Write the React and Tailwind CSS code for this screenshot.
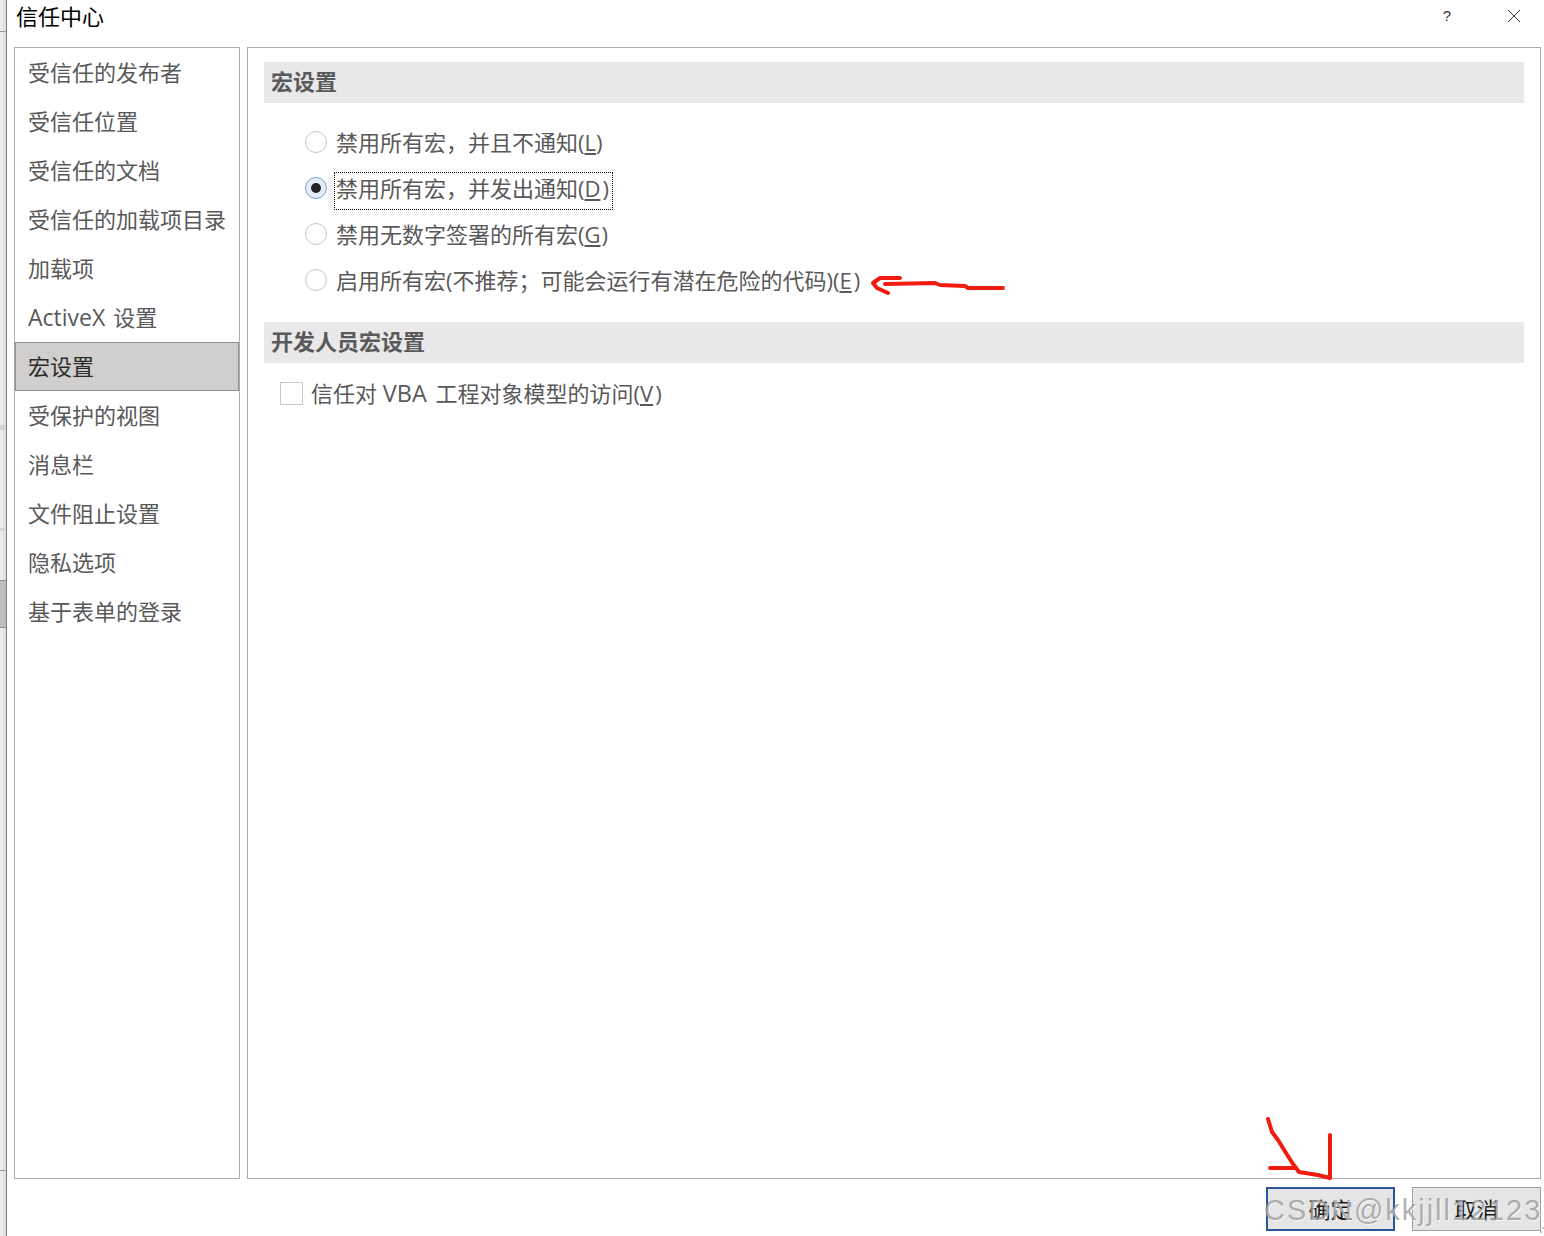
const font = { fontFamily: '"Open Sans", "Noto Sans CJK SC", "Liberation Sans", sans-serif' };

const NAV = ['受信任的发布者','受信任位置','受信任的文档','受信任的加载项目录','加载项','ActiveX 设置','宏设置','受保护的视图','消息栏','文件阻止设置','隐私选项','基于表单的登录'];

function Radio({ checked }) {
  return (
    <span className={`mt-[12px] w-[22px] h-[22px] rounded-full border flex items-center justify-center shrink-0 ${checked ? 'border-[#7ea3cc] bg-[#e4ecf7]' : 'border-[#c8c8c8] bg-white'}`}>
      {checked && <span className="w-[10px] h-[10px] rounded-full bg-[#222222]" />}
    </span>
  );
}

function Option({ checked, text, hot, tail, gap }) {
  return (
    <div className="h-[46px] flex items-start pl-[41px]">
      <Radio checked={checked} />
      <span className={`mt-[7px] ml-[7px] h-[38px] pl-px pr-[3px] pb-[7px] flex items-center text-[22px] leading-[24px] text-[#595959] whitespace-nowrap border border-dotted ${checked ? 'border-black' : 'border-transparent'}`}>
        <span>{text}<span className={`underline underline-offset-2 ${gap}`}>{hot}</span>{tail}</span>
      </span>
    </div>
  );
}

function NavLabel({ n }) {
  if (n === 'ActiveX 设置') {
    return <span><span className="text-[23px] mr-[2px]">ActiveX </span>设置</span>;
  }
  return n;
}

export default function App() {
  return (
    <div style={font} className="relative w-[1544px] h-[1236px] bg-white overflow-hidden flex">
      <div className="w-[7px] h-full shrink-0 flex flex-col border-r border-[#7d7d7d] bg-gradient-to-r from-[#f0f0f0] to-[#dcdcdc]">
        <div className="h-[32px] border-b border-[#9a9a9a]" />
        <div className="h-[393px]" />
        <div className="h-[5px] bg-[#d4d4d4]" />
        <div className="h-[98px]" />
        <div className="h-[3px] bg-[#d4d4d4]" />
        <div className="h-[49px]" />
        <div className="h-[48px] bg-[#bdbdb9] border-y border-[#8f8f8f]" />
        <div className="h-[543px] border-b border-[#9a9a9a]" />
        <div className="flex-1" />
      </div>
      <div className="flex-1 flex flex-col pl-[7px] pr-[3px]">
        <div className="h-[47px] flex items-start justify-between">
          <span className="ml-[2px] mt-px text-[22px] leading-[30px] text-black">信任中心</span>
          <div className="flex items-center mt-[7px] mr-[20px] text-[#333333]">
            <span className="text-[15px] leading-[18px] mr-[56px]" style={{ fontFamily: '"Liberation Sans", sans-serif' }}>?</span>
            <svg width="14" height="14" viewBox="0 0 14 14" fill="none" stroke="#333333" strokeWidth="1"><path d="M1 1 L13 13 M13 1 L1 13" /></svg>
          </div>
        </div>
        <div className="h-[1132px] flex gap-[7px]">
          <nav className="w-[226px] h-full border border-[#ababab] shrink-0">
            {NAV.map((n) => (
              <div key={n} className={`h-[49px] pl-[12px] pb-[2px] flex items-center text-[22px] leading-[30px] whitespace-nowrap ${n === '宏设置' ? 'bg-[#d0cfcd] border border-[#8f8f8f] text-[#2b2b2b]' : 'text-[#595959] ml-px'}`}><NavLabel n={n} /></div>
            ))}
          </nav>
          <main className="flex-1 h-full border border-[#ababab] pt-[14px] px-[16px]">
            <div className="h-[41px] bg-[#e9e9e9] pl-[7px] pb-[4px] flex items-center text-[22px] leading-[30px] font-bold text-[#595959]">宏设置</div>
            <div className="pt-[16px]">
              <Option text="禁用所有宏，并且不通知(" hot="L" tail=")" gap="" />
              <Option checked text="禁用所有宏，并发出通知(" hot="D" tail=")" gap="mr-[2px]" />
              <Option text="禁用无数字签署的所有宏(" hot="G" tail=")" gap="mr-px" />
              <Option text="启用所有宏(不推荐；可能会运行有潜在危险的代码)(" hot="E" tail=")" gap="mr-[2px]" />
            </div>
            <div className="mt-[19px] h-[41px] bg-[#e9e9e9] pl-[7px] pb-[4px] flex items-center text-[22px] leading-[30px] font-bold text-[#595959]">开发人员宏设置</div>
            <div className="mt-[11px] flex items-center pl-[16px] h-[38px]">
              <span className="w-[23px] h-[23px] border border-[#c8c8c8] bg-white shrink-0" />
              <span className="ml-[8px] text-[22px] leading-[30px] text-[#595959] whitespace-nowrap">信任对 <span className="text-[23.5px] mr-[2px]">VBA</span> <span className="ml-px">工程对象模型的访问(</span><span className="underline underline-offset-2 mr-[2px]">V</span>)</span>
            </div>
          </main>
        </div>
        <div className="flex justify-end gap-[17px] pt-[8px]">
          <button className="w-[129px] h-[44px] bg-[#e5e5e5] border-2 border-[#2a5699] pb-px text-[22px] leading-[30px] text-[#1a1a1a] flex items-center justify-center">确定</button>
          <button className="w-[129px] h-[44px] bg-[#e5e5e5] border border-[#a0a0a0] pb-px text-[22px] leading-[30px] text-[#1a1a1a] flex items-center justify-center">取消</button>
        </div>
      </div>

      <svg className="absolute left-0 top-0 pointer-events-none" width="1544" height="1236" fill="none" stroke="#f01c10" strokeLinecap="round" strokeLinejoin="round">
        <path strokeWidth="4" d="M900 278 L880 278 L873 283 L877 288 L888 293 M885 284 L935 283 L940 285 L965 286 L968 288 L1003 288" />
        <path strokeWidth="4" d="M1268 1119 L1272 1132 L1278 1140 L1286 1153 L1293 1164 L1299 1172 L1318 1175 L1330 1178 L1330 1135 M1270 1168 L1296 1168" />
        <path stroke="#c4c4c4" strokeWidth="2" strokeLinecap="butt" strokeDasharray="2 2" d="M1540 1232 L1544 1232 M1542 1228 L1544 1228" />
      </svg>

      <div className="absolute left-[1264px] top-[1190px] text-[29px] tracking-[1.95px] leading-[40px] text-[#8f8f8f]/70 whitespace-nowrap pointer-events-none" style={{ fontFamily: '"Liberation Sans", sans-serif', textShadow: '1px 1px 1px rgba(255,255,255,0.7)' }}>CSDN@kkjjll12123</div>
    </div>
  );
}
